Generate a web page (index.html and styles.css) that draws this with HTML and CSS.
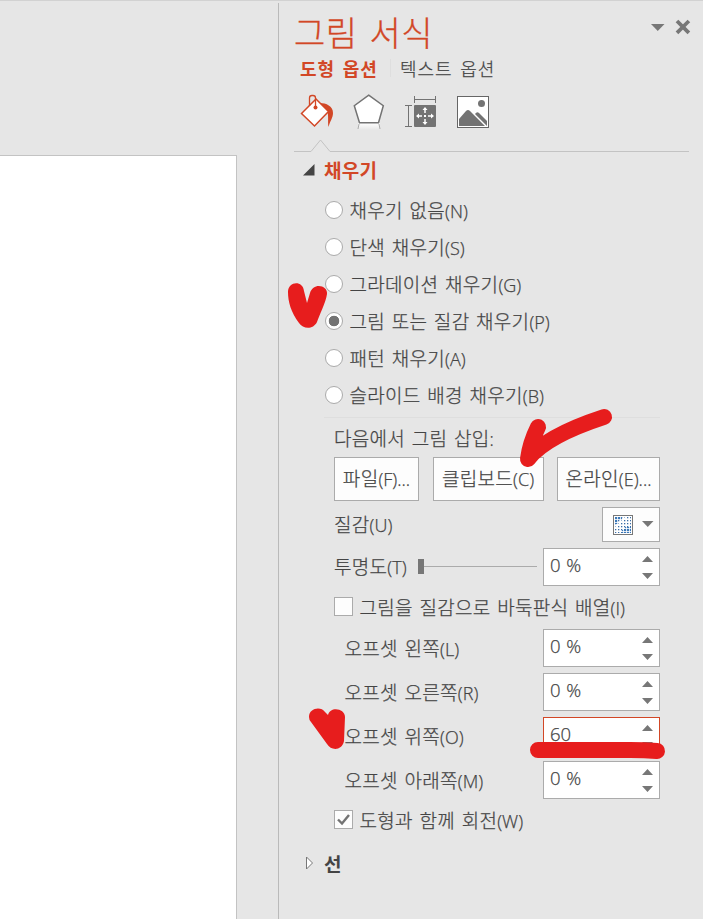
FILE: index.html
```
<!DOCTYPE html>
<html lang="ko">
<head>
<meta charset="utf-8">
<title>그림 서식</title>
<link rel="stylesheet" href="styles.css">
</head>
<body>
<div class="app">
  <div class="workspace"><div class="slide"></div></div>
  <aside class="panel">
    <header class="head">
      <h1>그림 서식</h1>
      <svg class="menu" width="14" height="8"><path d="M0 0H13.500L6.750 7Z" fill="#777"/></svg>
      <svg class="close" width="16" height="16"><path d="M3 3L13 13M13 3L3 13" stroke="#777" stroke-width="4" stroke-linecap="square" transform="translate(.5 .5) scale(.93)"/></svg>
    </header>
    <nav class="tabs"><span class="tab on">도형 옵션</span><span class="tab">텍스트 옵션</span></nav>
    <div class="icons">
      <svg width="195" height="62" viewBox="294 91 195 62">
        <defs><linearGradient id="fade" x1="0" y1="0" x2="0" y2="1"><stop offset="0" stop-color="#fff"/><stop offset="1" stop-color="#e6e6e6"/></linearGradient></defs>
        <path d="M320 103C326 103 333 106 333 113C333 118 330 121 328.500 127C327.500 122 329 115 327 111Z" fill="#d24726"/>
        <path d="M301.500 113.500L316 99L328.500 111.500L314.500 126Z" fill="#fff" stroke="#d24726" stroke-width="1.500"/>
        <path d="M309.500 106V98Q309.500 95.500 312 95.500H313Q315.500 95.500 315.500 98V107" fill="none" stroke="#d24726" stroke-width="1.300"/>
        <circle cx="315.500" cy="107.500" r="2" fill="#d24726"/>
        <path d="M358 123H380V130H358Z" fill="url(#fade)"/>
        <path d="M359 124L358 129M379 124L380 129" stroke="#aaa"/>
        <path d="M368.700 95.200L383.300 105.700L378.500 122.700H359.500L354.300 105.700Z" fill="#fff" stroke="#737373" stroke-width="1.500"/>
        <path d="M414.500 96V103M435.500 96V103M414.500 99.500H435.500M405 105.500H412M405 126.500H412M408.500 105.500V126.500" fill="none" stroke="#737373"/>
        <rect x="414" y="105" width="22" height="22" rx="1" fill="#737373"/>
        <path d="M425 108V113M425 119V124M417 116H422M428 116H433" stroke="#fff" stroke-width="1.500"/>
        <path d="M422.500 110L425 107L427.500 110ZM422.500 122L425 125L427.500 122ZM419 113.500L416 116L419 118.500ZM431 113.500L434 116L431 118.500ZM424 115H426V117H424Z" fill="#fff"/>
        <rect x="457.500" y="96.500" width="31" height="31" fill="#fff" stroke="#666"/>
        <circle cx="481.500" cy="103.500" r="3.500" fill="#737373"/>
        <path d="M459 126V119L466 111Q468 109 470 111L485 126ZM475 114Q477 111 479 113L487 121V126Z" fill="#737373"/>
        <path d="M474 114L486 126" stroke="#fff"/>
      </svg>
    </div>
    <svg class="rule" width="395" height="14"><path d="M0 12.500H17L26.500 1L36 12.500H395" fill="none" stroke="#c3c3c3"/></svg>
    <h2 class="section open"><svg width="12" height="12"><path d="M0 11.500H11.500V0Z" fill="#444"/></svg>채우기</h2>

    <div class="radios">
      <label><span class="radio"></span><span>채우기 없음<i>(N)</i></span></label>
      <label><span class="radio"></span><span>단색 채우기<i>(S)</i></span></label>
      <label><span class="radio"></span><span>그라데이션 채우기<i>(G)</i></span></label>
      <label><span class="radio checked"></span><span>그림 또는 질감 채우기<i>(P)</i></span></label>
      <label><span class="radio"></span><span>패턴 채우기<i>(A)</i></span></label>
      <label><span class="radio"></span><span>슬라이드 배경 채우기<i>(B)</i></span></label>
    </div>

    <div class="options">
      <div class="insert">다음에서 그림 삽입<i>:</i></div>
      <div class="buttons">
        <button class="file"><span>파일<i>(F)...</i></span></button>
        <button class="clip"><span>클립보드<i>(C)</i></span></button>
        <button class="online"><span>온라인<i>(E)...</i></span></button>
      </div>
      <div class="row texture">
        <span>질감<i>(U)</i></span>
        <div class="picker">
          <svg width="20" height="20"><defs><pattern id="dots" width="3" height="3" patternUnits="userSpaceOnUse"><rect width="1.300" height="1.300" fill="#3b6ea8"/></pattern><pattern id="squares" width="3" height="3" patternUnits="userSpaceOnUse"><rect width="2.200" height="2.200" fill="#3b78b8"/></pattern></defs><rect x=".5" y=".5" width="19" height="19" fill="#fff" stroke="#777"/><g transform="translate(2 2)"><path d="M0 0H16V16H0Z" fill="url(#dots)"/><path d="M0 0H7V3H3V7H0ZM16 10V16H7V13H10V10Z" fill="url(#squares)"/><path d="M11 0L0 11" stroke="#fff" stroke-width="1.500"/></g></svg>
          <svg width="12" height="7"><path d="M0 0H11.500L5.750 6Z" fill="#777"/></svg>
        </div>
      </div>
      <div class="row">
        <span>투명도<i>(T)</i></span>
        <div class="slider"><b></b></div>
        <div class="spin"><span>0 %</span><svg width="12" height="24"><path d="M0 6H11L5.500 0ZM0 17H11L5.500 23Z" fill="#777"/></svg></div>
      </div>
      <label class="check"><span class="box"></span><span>그림을 질감으로 바둑판식 배열<i>(I)</i></span></label>
      <div class="row offset"><span>오프셋 왼쪽<i>(L)</i></span><div class="spin"><span>0 %</span><svg width="12" height="24"><path d="M0 6H11L5.500 0ZM0 17H11L5.500 23Z" fill="#777"/></svg></div></div>
      <div class="row offset"><span>오프셋 오른쪽<i>(R)</i></span><div class="spin"><span>0 %</span><svg width="12" height="24"><path d="M0 6H11L5.500 0ZM0 17H11L5.500 23Z" fill="#777"/></svg></div></div>
      <div class="row offset"><span>오프셋 위쪽<i>(O)</i></span><div class="spin active"><span>60</span><svg width="12" height="24"><path d="M0 6H11L5.500 0ZM0 17H11L5.500 23Z" fill="#777"/></svg></div></div>
      <div class="row offset"><span>오프셋 아래쪽<i>(M)</i></span><div class="spin"><span>0 %</span><svg width="12" height="24"><path d="M0 6H11L5.500 0ZM0 17H11L5.500 23Z" fill="#777"/></svg></div></div>
      <label class="check"><span class="box"><svg width="17" height="17"><path d="M3 8.500L7 12.500L14 4" fill="none" stroke="#737373" stroke-width="2.400"/></svg></span><span>도형과 함께 회전<i>(W)</i></span></label>
    </div>
    <h2 class="section closed"><svg width="10" height="14"><path d="M2.500 1V13L8.500 7Z" fill="#fff" stroke="#777"/></svg>선</h2>
  </aside>
  <svg class="marks" width="703" height="919">
    <g fill="#e71d1d">
      <path d="M288 292C288 281 303 280 304 291L307 303L310 293C313 282 328 285 327 294C326 302 319 316 317 322C313 330 303 329 299 323C291 312 288 302 288 292Z"/>
      <path d="M309 717C309 708 321 706 325 712L328 715C330 706 345 708 345 717L344 741C342 751 331 751 327 744L311 722Q309 720 309 717Z"/>
      <path d="M536 440L548 436L535 460Z"/>
    </g>
    <g fill="none" stroke="#e71d1d" stroke-width="16" stroke-linecap="round" stroke-linejoin="round">
      <path d="M538 427Q530 443 528 459Q546 436 604 417"/>
      <path d="M538 750H630Q645 750 657 751"/>
    </g>
  </svg>
</div>
</body>
</html>
```

FILE: styles.css
```
* { box-sizing: border-box; }
body {
  margin: 0;
  background: #e6e6e6;
  color: #444;
  font-family: "Noto Sans CJK KR", sans-serif;
  font-size: 19px;
  font-weight: 300;
  line-height: 1;
  -webkit-text-stroke: .25px;
}
.app {
  position: relative;
  display: flex;
  width: 703px;
  height: 919px;
  overflow: hidden;
  border-top: 1px solid #d2d2d2;
}
.workspace { width: 278px; padding-top: 154px; }
.slide {
  width: 237px;
  height: 764px;
  background: #fff;
  border: solid #c3c3c3;
  border-width: 1px 1px 0 0;
}
.panel {
  width: 425px;
  margin-top: 2px;
  border-left: 1px solid #bababa;
  padding-left: 15px;
  white-space: nowrap;
}
i {
  font: 300 18px/1 "Open Sans", "Noto Sans", sans-serif;
  letter-spacing: 0;
}
h1, h2 { margin: 0; -webkit-text-stroke: 0; }
.head { display: flex; height: 53px; align-items: flex-start; }
h1 {
  width: 357px;
  padding-top: 12px;
  color: #d24726;
  font-size: 34px;
  font-weight: 300;
  letter-spacing: .5px;
  word-spacing: 2px;
  -webkit-text-stroke: .3px;
}
.menu { margin-top: 21px; }
.close { margin: 16px 0 0 10px; }
.tabs { display: flex; height: 24px; margin-bottom: 2px; align-items: center; padding-left: 6px; font-size: 18px; word-spacing: 2px; letter-spacing: .9px; }
.tab.on { width: 91px; margin-right: 9px; border-right: 1px solid #dedede; color: #d24726; font-weight: 700; -webkit-text-stroke: 0; }
.icons { height: 57px; padding-top: 9px; }
.icons svg { display: block; }
.rule { display: block; position: relative; }
.section { display: flex; align-items: center; font-size: 19px; font-weight: 700; }
.section.open { height: 33px; margin-bottom: 5px; gap: 9px; padding-left: 9px; color: #d24726; letter-spacing: .3px; }
.section.closed { height: 42px; gap: 10px; padding-left: 10px; }
.radios { padding-left: 31px; word-spacing: 1px; letter-spacing: .3px; }
.radios label { display: flex; height: 37px; align-items: center; gap: 6.500px; }
.radio { width: 18px; height: 18px; border: 1px solid #aaa; border-radius: 50%; background: #fff; }
.checked { background: radial-gradient(circle, #737373 5px, #fff 5.600px); }
.options {
  width: 336px;
  margin: 4px 0 0 30px;
  padding-left: 10px;
  border-top: 1px solid #dedede;
  word-spacing: 1px;
  letter-spacing: .3px;
}
.insert { height: 39px; line-height: 40px; }
.buttons { display: flex; justify-content: space-between; }
button {
  height: 44px;
  padding: 0 0 2px;
  border: 1px solid #ababab;
  background: #fdfdfd;
  color: #444;
  font: inherit;
  letter-spacing: inherit;
}
.file { width: 85px; }
.clip { width: 111px; }
.online { width: 103px; }
.row { display: flex; height: 38px; align-items: center; justify-content: space-between; margin-top: 6px; }
.texture { height: 35px; }
.picker { display: flex; width: 58px; height: 35px; align-items: center; gap: 9px; padding-left: 10px; border: 1px solid #ababab; background: #fdfdfd; }
.slider { width: 119px; height: 1px; margin: 0 6px 0 auto; background: #ababab; transform: translateY(-1px); }
.slider b { display: block; width: 6px; height: 15px; margin-top: -7px; background: #777; }
.row > span { padding-bottom: 2px; }
.spin {
  display: flex;
  width: 117px;
  height: 38px;
  align-items: center;
  justify-content: space-between;
  padding: 0 5px 0 6px;
  border: 1px solid #ababab;
  background: #fff;
  font: 300 18.500px/1 "Open Sans", "Noto Sans", sans-serif;
  letter-spacing: 0;
}
.spin svg { margin-top: 2px; }
.spin span { padding-bottom: 4px; }
.spin.active { border-color: #d24726; }
.check { display: flex; height: 43px; align-items: center; gap: 6.500px; padding-bottom: 2px; }
.check + .offset { margin-top: 0; }
.offset { padding-left: 10.500px; }
.offset > span { padding-bottom: 0; }
.box { width: 19px; height: 19px; border: 1px solid #ababab; background: #fdfdfd; }
.box svg { display: block; }
.marks { position: absolute; top: -1px; left: 0; }
```
